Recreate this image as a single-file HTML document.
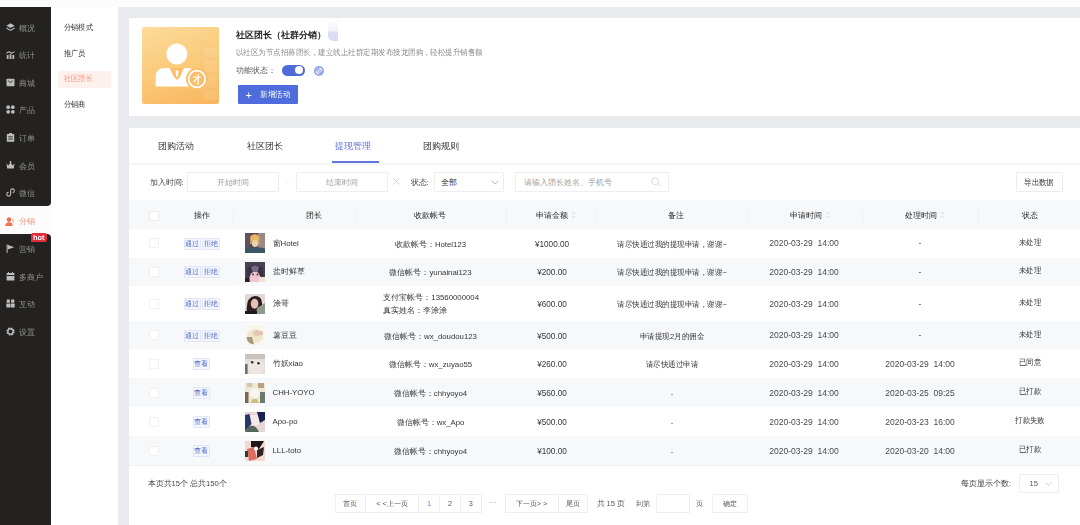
<!DOCTYPE html><html><head><meta charset="utf-8"><style>
*{margin:0;padding:0;box-sizing:border-box}
html,body{width:1080px;height:525px;overflow:hidden;background:#fcfcfc;font-family:"Liberation Sans",sans-serif;color:#555}
.a{position:absolute;white-space:nowrap;line-height:10px}
.side{position:absolute;left:0;width:51px;background:#232221}
.si{position:absolute;left:19px;font-size:7.6px;color:#929292;line-height:10px;white-space:nowrap}
.ic{position:absolute;left:5px;line-height:0}
svg{display:block}
.sm{position:absolute;left:64px;font-size:7.6px;color:#333;line-height:10px;white-space:nowrap;transform:scaleX(0.9);transform-origin:0 0}
.tab{position:absolute;font-size:9.2px;color:#333;line-height:12px;white-space:nowrap}
.inp{position:absolute;border:1px solid #eeeeee;background:#fff;border-radius:1px}
.th{position:absolute;font-size:7.8px;color:#262626;line-height:10px;white-space:nowrap}
.td{position:absolute;font-size:7.8px;color:#363636;line-height:10px;white-space:nowrap}
.ctr{transform:translateX(-50%)}
.sep{position:absolute;width:1px;height:12px;top:209px;background:#eeeff2}
.cb{position:absolute;left:149px;width:10px;height:10px;border:1px solid #f0f0f0;background:#fff;border-radius:1px}
.btn{position:absolute;height:12px;font-size:7px;line-height:10px;color:#4a60c8;border:1px solid #e0e5f7;background:#f5f7fe;text-align:center;border-radius:1px;letter-spacing:-0.2px}
.av{position:absolute;left:245px;width:20px;height:20px;overflow:hidden}
.av svg{filter:blur(0.6px)}
.pg{position:absolute;top:494px;height:18.5px;border:1px solid #efefef;font-size:7.4px;line-height:17px;color:#555;text-align:center;background:#fff}
</style></head><body><div id="wrap" style="position:absolute;left:0;top:0;width:1080px;height:525px;overflow:hidden;filter:blur(0.4px)">
<div style="position:absolute;left:118px;top:7px;width:962px;height:518px;background:#e9eaee"></div>
<div style="position:absolute;left:51px;top:7px;width:67px;height:518px;background:#fff"></div>
<div class="side" style="top:7px;height:199px;border-bottom-right-radius:4px"></div>
<div class="side" style="top:234px;height:291px;border-top-right-radius:4px"></div>
<div style="position:absolute;left:129px;top:18px;width:951px;height:98px;background:#fff"></div>
<div style="position:absolute;left:129px;top:128px;width:951px;height:397px;background:#fff"></div>
<div class="ic" style="top:22.7px;left:5.5px"><svg width="9" height="9" viewBox="0 0 9 9"><path d="M4.5 0.3L8.7 2.7L4.5 5.1L0.3 2.7Z" fill="#bdbdbd"/><path d="M0.6 4.6L4.5 6.8L8.4 4.6L8.8 5.6L4.5 8L0.2 5.6Z" fill="#bdbdbd"/></svg></div>
<div class="si" style="top:23.7px">概况</div>
<div class="ic" style="top:50.3px;left:5.5px"><svg width="9" height="9" viewBox="0 0 9 9"><path d="M0.5 3.5Q2.5 1 4.5 2.5T8.5 1.5" stroke="#bdbdbd" stroke-width="1.1" fill="none"/><rect x="0.8" y="5" width="1.8" height="4" fill="#bdbdbd"/><rect x="3.6" y="4.2" width="1.8" height="4.8" fill="#bdbdbd"/><rect x="6.4" y="5" width="1.8" height="4" fill="#bdbdbd"/></svg></div>
<div class="si" style="top:51.3px">统计</div>
<div class="ic" style="top:77.8px;left:5.5px"><svg width="9" height="9" viewBox="0 0 9 9"><rect x="0.5" y="0.8" width="8" height="7.4" rx="0.6" fill="#bdbdbd"/><path d="M2.2 2.8L4.5 4.6L6.8 2.8" stroke="#232221" stroke-width="0.9" fill="none"/></svg></div>
<div class="si" style="top:78.8px">商城</div>
<div class="ic" style="top:105.39999999999999px;left:5.5px"><svg width="9" height="9" viewBox="0 0 9 9"><circle cx="2.2" cy="2.2" r="1.9" fill="#bdbdbd"/><circle cx="6.8" cy="2.2" r="1.9" fill="#bdbdbd"/><circle cx="2.2" cy="6.8" r="1.9" fill="#bdbdbd"/><circle cx="6.8" cy="6.8" r="1.9" fill="#bdbdbd"/></svg></div>
<div class="si" style="top:106.39999999999999px">产品</div>
<div class="ic" style="top:133.0px;left:5.5px"><svg width="9" height="9" viewBox="0 0 9 9"><rect x="0.8" y="1" width="7.4" height="7.8" rx="0.5" fill="#bdbdbd"/><rect x="3" y="0" width="3" height="2" fill="#bdbdbd"/><rect x="2.3" y="3.4" width="4.4" height="0.9" fill="#232221"/><rect x="2.3" y="5.6" width="4.4" height="0.9" fill="#232221"/></svg></div>
<div class="si" style="top:134.0px">订单</div>
<div class="ic" style="top:160.60000000000002px;left:5.5px"><svg width="9" height="9" viewBox="0 0 9 9"><path d="M0.5 2.5L2.5 4.5L4.5 1L6.5 4.5L8.5 2.5L7.8 7.5H1.2Z" fill="#bdbdbd"/><circle cx="4.5" cy="1" r="0.9" fill="#bdbdbd"/></svg></div>
<div class="si" style="top:161.60000000000002px">会员</div>
<div class="ic" style="top:188.20000000000002px;left:5.5px"><svg width="9" height="9" viewBox="0 0 9 9"><path d="M2.7 4.3A1.9 1.9 0 1 0 4.6 6.2V2.8A1.9 1.9 0 1 1 6.5 4.7" stroke="#bdbdbd" stroke-width="1.1" fill="none"/></svg></div>
<div class="si" style="top:189.20000000000002px">微信</div>
<div class="ic" style="top:216.5px;left:5px"><svg width="9" height="9" viewBox="0 0 9 9"><circle cx="4" cy="2.6" r="2.3" fill="#f0704a"/><path d="M0.3 9Q0.5 5.3 4 5.3Q7.5 5.3 7.7 9Z" fill="#f0704a"/><path d="M7.2 2.5L8.5 1.8V6.5L7.6 6Z" fill="#f6a07f"/></svg></div>
<div class="si" style="top:216.8px;color:#f2907a">分销</div>
<div class="ic" style="top:244.20000000000002px;left:5.5px"><svg width="9" height="9" viewBox="0 0 9 9"><rect x="0.6" y="0.5" width="1" height="8.5" fill="#bdbdbd"/><path d="M1.6 0.8L8.2 3.3L1.6 5.6Z" fill="#bdbdbd"/></svg></div>
<div class="si" style="top:245.20000000000002px">营销</div>
<div class="ic" style="top:271.8px;left:5.5px"><svg width="9" height="9" viewBox="0 0 9 9"><rect x="0.6" y="1" width="7.8" height="7.6" rx="0.5" fill="#bdbdbd"/><rect x="0.6" y="3" width="7.8" height="1" fill="#232221"/><rect x="2" y="0" width="1" height="2" fill="#bdbdbd"/><rect x="6" y="0" width="1" height="2" fill="#bdbdbd"/></svg></div>
<div class="si" style="top:272.8px">多商户</div>
<div class="ic" style="top:299.2px;left:5.5px"><svg width="9" height="9" viewBox="0 0 9 9"><rect x="0.7" y="0.5" width="3.2" height="3.2" rx="0.5" fill="#bdbdbd"/><rect x="5.1" y="0.5" width="3.2" height="3.2" rx="0.5" fill="#bdbdbd"/><rect x="0.3" y="4.6" width="4" height="4" rx="0.5" fill="#bdbdbd"/><rect x="4.7" y="4.6" width="4" height="4" rx="0.5" fill="#bdbdbd"/></svg></div>
<div class="si" style="top:300.2px">互动</div>
<div class="ic" style="top:326.8px;left:5.5px"><svg width="9" height="9" viewBox="0 0 9 9"><circle cx="4.5" cy="4.5" r="3.2" fill="none" stroke="#bdbdbd" stroke-width="1.8" stroke-dasharray="1.6 0.9"/><circle cx="4.5" cy="4.5" r="2.6" fill="none" stroke="#bdbdbd" stroke-width="1.2"/></svg></div>
<div class="si" style="top:327.8px">设置</div>
<div class="a" style="left:31px;top:233px;width:15.5px;height:9px;background:#e22d3b;border-radius:2px 2px 2px 0;color:#fff;font-size:7.5px;font-weight:bold;line-height:9px;text-align:center">hot</div>
<div style="position:absolute;left:58px;top:71px;width:53px;height:17px;background:#fdf1ed;border-radius:2px"></div>
<div class="sm" style="top:22.5px;color:#333">分销模式</div>
<div class="sm" style="top:48.7px;color:#333">推广员</div>
<div class="sm" style="top:74.0px;color:#f39a80">社区团长</div>
<div class="sm" style="top:100.10000000000001px;color:#333">分销商</div>
<div style="position:absolute;left:142px;top:27px;width:77px;height:77px;border-radius:2px;overflow:hidden;background:linear-gradient(160deg,#fcdb9a 0%,#fbca7a 50%,#f9b55c 100%)">
<svg width="77" height="77" viewBox="0 0 77 77" style="position:absolute;left:0;top:0">
<rect x="62" y="21" width="13" height="52" fill="#fff" opacity="0.1"/><rect x="63" y="30" width="10" height="3" fill="#f0a040" opacity="0.12"/><rect x="63" y="45" width="10" height="3" fill="#f0a040" opacity="0.12"/><rect x="63" y="60" width="10" height="3" fill="#f0a040" opacity="0.12"/>
<circle cx="34.8" cy="27" r="10.5" fill="#fff"/>
<path d="M13.7 59.5V50Q13.7 41 23 41H45Q54 41 54 50V59.5Z" fill="#fff"/>
<path d="M27.5 41H42L38 50L35 53L32 50Z" fill="#fbbf6c"/>
<path d="M33.6 43.5H36.4L36 48.5L35 50L34 48.5Z" fill="#fff"/>
<circle cx="54.9" cy="52" r="11" fill="#fbbf6c"/>
<circle cx="54.9" cy="52" r="8.3" fill="none" stroke="#fff" stroke-width="1.7"/>
<path d="M51 50.2H58.8M56.2 47V56Q56.2 57.3 54.8 56.6M55.8 50.8L51.5 55" stroke="#fff" stroke-width="1.3" fill="none" opacity="0.9"/>
</svg></div>
<div class="a" style="left:236px;top:30px;font-size:8.8px;font-weight:bold;color:#222;line-height:11px">社区团长（社群分销）</div>
<div style="position:absolute;left:328px;top:22px;width:10px;height:19px;background:linear-gradient(180deg,#fafafe 0%,#f4f3fd 48%,#dedefa 52%,#dadaf8 100%);border-radius:0 0 0 5px"></div>
<div class="a" style="left:236px;top:48px;font-size:7.6px;color:#8c8c8c;transform:scaleX(0.935);transform-origin:0 0">以社区为节点招募团长，建立线上社群定期发布接龙团购，轻松提升销售额</div>
<div class="a" style="left:236px;top:65.5px;font-size:7.6px;color:#555">功能状态：</div>
<div style="position:absolute;left:282px;top:65px;width:23px;height:10.5px;border-radius:6px;background:#4d6ad8"></div>
<div style="position:absolute;left:294.5px;top:66.2px;width:8.3px;height:8.3px;border-radius:50%;background:#fff"></div>
<div style="position:absolute;left:314px;top:66px;width:10px;height:10px;border-radius:50%;background:#9aa7ec"><svg width="10" height="10" viewBox="0 0 10 10"><path d="M3.2 6.8L6.8 3.2M4.3 3.6L5.2 2.7Q6.2 1.9 7.2 2.8Q8 3.8 7.3 4.8L6.4 5.7M5.7 6.4L4.8 7.3Q3.8 8.1 2.8 7.2Q2 6.2 2.7 5.2L3.6 4.3" stroke="#fff" stroke-width="0.9" fill="none"/></svg></div>
<div style="position:absolute;left:238px;top:85px;width:60px;height:19px;background:#4e6cdb;border-radius:1px"></div>
<div class="a" style="left:245.5px;top:88.5px;font-size:11px;color:#fff;line-height:12px;font-weight:normal">+</div>
<div class="a" style="left:260px;top:89.5px;font-size:7.6px;color:#fff;transform:scaleX(0.94);transform-origin:0 0">新增活动</div>
<div class="tab" style="left:158px;top:140px;color:#333">团购活动</div>
<div class="tab" style="left:247px;top:140px;color:#333">社区团长</div>
<div class="tab" style="left:335px;top:140px;color:#5a6fd9">提现管理</div>
<div class="tab" style="left:423px;top:140px;color:#333">团购规则</div>
<div style="position:absolute;left:129px;top:162.5px;width:951px;height:2px;background:#f4f4f5"></div>
<div style="position:absolute;left:332px;top:161px;width:47px;height:2px;background:#6275dc"></div>
<div class="a" style="left:149.5px;top:178px;font-size:7.6px;color:#444">加入时间:</div>
<div class="inp" style="left:187px;top:172px;width:92px;height:19.5px"></div>
<div class="a ctr" style="left:233px;top:178px;font-size:7.6px;color:#a0a0a0">开始时间</div>
<div class="a" style="left:286.5px;top:177px;font-size:7.4px;color:#ddd">-</div>
<div class="inp" style="left:296px;top:172px;width:92px;height:19.5px"></div>
<div class="a ctr" style="left:342px;top:178px;font-size:7.6px;color:#a0a0a0">结束时间</div>
<svg style="position:absolute;left:393px;top:178px" width="7" height="7" viewBox="0 0 7 7"><path d="M0.5 0.5L6.5 6.5M6.5 0.5L0.5 6.5" stroke="#c4c4c4" stroke-width="0.7"/></svg>
<div class="a" style="left:410.5px;top:178px;font-size:7.6px;color:#444">状态:</div>
<div class="inp" style="left:434px;top:172px;width:70px;height:19.5px"></div>
<div class="a" style="left:440.5px;top:177.8px;font-size:7.6px;color:#333">全部</div>
<svg style="position:absolute;left:491px;top:179.5px" width="8" height="5" viewBox="0 0 8 5"><path d="M0.5 0.8L4 4L7.5 0.8" stroke="#aaa" stroke-width="0.8" fill="none"/></svg>
<div class="inp" style="left:514.5px;top:172px;width:154px;height:19.5px"></div>
<div class="a" style="left:523.5px;top:178px;font-size:7.6px;color:#a0a0a0">请输入团长姓名、手机号</div>
<svg style="position:absolute;left:651px;top:177px" width="10" height="10" viewBox="0 0 10 10"><circle cx="4.3" cy="4.3" r="3.4" stroke="#d4d4d4" stroke-width="0.8" fill="none"/><path d="M6.8 6.8L9.2 9.2" stroke="#d4d4d4" stroke-width="0.8"/></svg>
<div class="inp" style="left:1016px;top:172px;width:47px;height:20px;border-color:#ececec"></div>
<div class="a ctr" style="left:1039px;top:177.5px;font-size:7.6px;color:#333;transform:translateX(-50%) scaleX(0.93)">导出数据</div>
<div style="position:absolute;left:129px;top:200px;width:951px;height:29px;background:#f7f8fa"></div>
<div class="cb" style="top:210.5px;border-color:#ececec"></div>
<div class="th ctr" style="left:201.5px;top:211.4px">操作</div>
<div class="th ctr" style="left:314px;top:211.4px">团长</div>
<div class="th ctr" style="left:430px;top:211.4px">收款帐号</div>
<div class="th ctr" style="left:676px;top:211.4px">备注</div>
<div class="th ctr" style="left:1030px;top:211.4px">状态</div>
<div class="th" style="left:535.5px;top:211.4px">申请金额</div>
<svg style="position:absolute;left:571.0px;top:211px" width="5" height="8" viewBox="0 0 5 8"><path d="M0.8 3L2.5 1.2L4.2 3M0.8 5L2.5 6.8L4.2 5" stroke="#c8c8c8" stroke-width="0.7" fill="none"/></svg>
<div class="th" style="left:789.5px;top:211.4px">申请时间</div>
<svg style="position:absolute;left:825.0px;top:211px" width="5" height="8" viewBox="0 0 5 8"><path d="M0.8 3L2.5 1.2L4.2 3M0.8 5L2.5 6.8L4.2 5" stroke="#c8c8c8" stroke-width="0.7" fill="none"/></svg>
<div class="th" style="left:904.5px;top:211.4px">处理时间</div>
<svg style="position:absolute;left:940.0px;top:211px" width="5" height="8" viewBox="0 0 5 8"><path d="M0.8 3L2.5 1.2L4.2 3M0.8 5L2.5 6.8L4.2 5" stroke="#c8c8c8" stroke-width="0.7" fill="none"/></svg>
<div class="sep" style="left:233px"></div>
<div class="sep" style="left:355px"></div>
<div class="sep" style="left:505.5px"></div>
<div class="sep" style="left:596px"></div>
<div class="sep" style="left:747.5px"></div>
<div class="sep" style="left:862px"></div>
<div class="sep" style="left:978px"></div>
<div class="cb" style="top:238.25px"></div>
<div class="btn" style="left:183.5px;top:237.75px;width:17px">通过</div>
<div class="btn" style="left:202px;top:237.75px;width:17.5px">拒绝</div>
<div class="av" style="top:233.25px"><svg width="20" height="20" viewBox="0 0 20 20"><rect width="20" height="20" fill="#4e4450"/><rect x="13" y="0" width="7" height="16" fill="#9c8884"/><rect x="0" y="0" width="5" height="20" fill="#5e5262"/><path d="M5 3Q10 -1 15 3L15 11L5 11Z" fill="#c89a58"/><ellipse cx="10" cy="5.5" rx="4" ry="3.5" fill="#e6b868"/><ellipse cx="10" cy="10.5" rx="3.2" ry="3.6" fill="#e4cfae"/><path d="M0 20V15.5Q10 12.5 20 15.5V20Z" fill="#3b5664"/></svg></div>
<div class="td" style="left:272.5px;top:238.85px;color:#333">窗Hotel</div>
<div class="td ctr" style="left:430.5px;top:239.75px">收款帐号：Hotel123</div>
<div class="td ctr" style="left:552px;top:239.75px;font-size:8.2px">¥1000.00</div>
<div class="td ctr" style="left:672px;top:239.75px;font-size:8px;transform:translateX(-50%) scaleX(0.94)">请尽快通过我的提现申请，谢谢~</div>
<div class="td ctr" style="left:804px;top:238.45px;font-size:8.5px;color:#4a4a4a">2020-03-29&nbsp;&nbsp;14:00</div>
<div class="td ctr" style="left:920px;top:238.45px;font-size:8.5px;color:#4a4a4a">-</div>
<div class="td ctr" style="left:1030px;top:237.95px;font-size:8px;transform:translateX(-50%) scaleX(0.92)">未处理</div>
<div style="position:absolute;left:129px;top:257.5px;width:951px;height:28.5px;background:#f7f8fa"></div>
<div class="cb" style="top:266.75px"></div>
<div class="btn" style="left:183.5px;top:266.25px;width:17px">通过</div>
<div class="btn" style="left:202px;top:266.25px;width:17.5px">拒绝</div>
<div class="av" style="top:261.75px"><svg width="20" height="20" viewBox="0 0 20 20"><rect width="20" height="20" fill="#484250"/><path d="M2 6Q10 0 18 6L18 20L2 20Z" fill="#3a3242"/><path d="M5 20Q3 11 10 9.5Q16 10 16 20Z" fill="#efc4cf"/><path d="M6 5Q10 2 14 5L12.5 10L7.5 10Z" fill="#7a6a88"/><circle cx="8" cy="12.5" r="1" fill="#4a3848"/><circle cx="12.5" cy="12.5" r="1" fill="#4a3848"/><rect x="14" y="15" width="6" height="5" fill="#f2e2d6"/><rect x="0" y="16" width="4" height="4" fill="#262226"/></svg></div>
<div class="td" style="left:272.5px;top:267.35px;color:#333">盐时鲜草</div>
<div class="td ctr" style="left:430.5px;top:268.25px">微信帐号：yunainai123</div>
<div class="td ctr" style="left:552px;top:268.25px;font-size:8.2px">¥200.00</div>
<div class="td ctr" style="left:672px;top:268.25px;font-size:8px;transform:translateX(-50%) scaleX(0.94)">请尽快通过我的提现申请，谢谢~</div>
<div class="td ctr" style="left:804px;top:266.95px;font-size:8.5px;color:#4a4a4a">2020-03-29&nbsp;&nbsp;14:00</div>
<div class="td ctr" style="left:920px;top:266.95px;font-size:8.5px;color:#4a4a4a">-</div>
<div class="td ctr" style="left:1030px;top:266.45px;font-size:8px;transform:translateX(-50%) scaleX(0.92)">未处理</div>
<div class="cb" style="top:298.5px"></div>
<div class="btn" style="left:183.5px;top:298.0px;width:17px">通过</div>
<div class="btn" style="left:202px;top:298.0px;width:17.5px">拒绝</div>
<div class="av" style="top:293.5px"><svg width="20" height="20" viewBox="0 0 20 20"><rect width="20" height="20" fill="#e2d8d8"/><path d="M2 20Q0 3 10 2Q18 2 17 12L14 20Z" fill="#2e1e20"/><ellipse cx="9.6" cy="9.8" rx="3.8" ry="5" fill="#e6c2b4"/><path d="M12 14L20 9V20H11Z" fill="#8c9c8a"/><rect x="0" y="17" width="12" height="3" fill="#1a1a1a"/></svg></div>
<div class="td" style="left:272.5px;top:299.1px;color:#333">涂哥</div>
<div class="td" style="left:383.3px;top:292.9px">支付宝帐号：13560000004</div>
<div class="td" style="left:383.3px;top:306.4px">真实姓名：李涂涂</div>
<div class="td ctr" style="left:552px;top:300.0px;font-size:8.2px">¥600.00</div>
<div class="td ctr" style="left:672px;top:300.0px;font-size:8px;transform:translateX(-50%) scaleX(0.94)">请尽快通过我的提现申请，谢谢~</div>
<div class="td ctr" style="left:804px;top:298.7px;font-size:8.5px;color:#4a4a4a">2020-03-29&nbsp;&nbsp;14:00</div>
<div class="td ctr" style="left:920px;top:298.7px;font-size:8.5px;color:#4a4a4a">-</div>
<div class="td ctr" style="left:1030px;top:298.2px;font-size:8px;transform:translateX(-50%) scaleX(0.92)">未处理</div>
<div style="position:absolute;left:129px;top:321px;width:951px;height:28px;background:#f7f8fa"></div>
<div class="cb" style="top:330.0px"></div>
<div class="btn" style="left:183.5px;top:329.5px;width:17px">通过</div>
<div class="btn" style="left:202px;top:329.5px;width:17.5px">拒绝</div>
<div class="av" style="top:325.0px"><svg width="20" height="20" viewBox="0 0 20 20"><rect width="20" height="20" fill="#faf6ee"/><ellipse cx="10" cy="11" rx="8" ry="7" fill="#f0e6cc"/><path d="M1.5 12Q2 19 9 19.5L7 12Z" fill="#a8967c"/><ellipse cx="12" cy="8" rx="4" ry="3" fill="#dccbb0"/><circle cx="16" cy="8" r="2.2" fill="#e6c0bc"/></svg></div>
<div class="td" style="left:272.5px;top:330.6px;color:#333">薯豆豆</div>
<div class="td ctr" style="left:430.5px;top:331.5px">微信帐号：wx_doudou123</div>
<div class="td ctr" style="left:552px;top:331.5px;font-size:8.2px">¥500.00</div>
<div class="td ctr" style="left:672px;top:331.5px;font-size:8px;transform:translateX(-50%) scaleX(0.94)">申请提现2月的佣金</div>
<div class="td ctr" style="left:804px;top:330.2px;font-size:8.5px;color:#4a4a4a">2020-03-29&nbsp;&nbsp;14:00</div>
<div class="td ctr" style="left:920px;top:330.2px;font-size:8.5px;color:#4a4a4a">-</div>
<div class="td ctr" style="left:1030px;top:329.7px;font-size:8px;transform:translateX(-50%) scaleX(0.92)">未处理</div>
<div class="cb" style="top:358.5px"></div>
<div class="btn" style="left:192.5px;top:358.0px;width:17px">查看</div>
<div class="av" style="top:353.5px"><svg width="20" height="20" viewBox="0 0 20 20"><rect width="20" height="20" fill="#e4dedb"/><rect x="0" y="0" width="20" height="5" fill="#cbc2ba"/><rect x="0" y="10" width="2.6" height="10" fill="#6e6e6e"/><ellipse cx="11" cy="13" rx="8" ry="7.5" fill="#efe6e4"/><circle cx="7.2" cy="8.2" r="1.3" fill="#3a2a28"/><circle cx="13.5" cy="9.3" r="1.3" fill="#3a2a28"/></svg></div>
<div class="td" style="left:272.5px;top:359.1px;color:#333">竹妖xiao</div>
<div class="td ctr" style="left:430.5px;top:360.0px">微信帐号：wx_zuyao55</div>
<div class="td ctr" style="left:552px;top:360.0px;font-size:8.2px">¥260.00</div>
<div class="td ctr" style="left:672px;top:360.0px;font-size:8px;transform:translateX(-50%) scaleX(0.94)">请尽快通过申请</div>
<div class="td ctr" style="left:804px;top:358.7px;font-size:8.5px;color:#4a4a4a">2020-03-29&nbsp;&nbsp;14:00</div>
<div class="td ctr" style="left:920px;top:358.7px;font-size:8.5px;color:#4a4a4a">2020-03-29&nbsp;&nbsp;14:00</div>
<div class="td ctr" style="left:1030px;top:358.2px;font-size:8px;transform:translateX(-50%) scaleX(0.92)">已同意</div>
<div style="position:absolute;left:129px;top:378px;width:951px;height:29px;background:#f7f8fa"></div>
<div class="cb" style="top:387.5px"></div>
<div class="btn" style="left:192.5px;top:387.0px;width:17px">查看</div>
<div class="av" style="top:382.5px"><svg width="20" height="20" viewBox="0 0 20 20"><rect width="20" height="20" fill="#eee8d8"/><rect x="0" y="9" width="3.5" height="11" fill="#786858"/><rect x="15" y="9" width="5" height="11" fill="#6a7a6c"/><circle cx="10" cy="10" r="5" fill="#f6f6f0"/><rect x="2" y="0" width="5" height="4" fill="#d4c4a8"/><rect x="13" y="0" width="6" height="5" fill="#b8a080"/><path d="M5 20L8 16L12 16L14 20Z" fill="#cdbd80"/></svg></div>
<div class="td" style="left:272.5px;top:388.1px;color:#333">CHH-YOYO</div>
<div class="td ctr" style="left:430.5px;top:389.0px">微信帐号：chhyoyo4</div>
<div class="td ctr" style="left:552px;top:389.0px;font-size:8.2px">¥560.00</div>
<div class="td ctr" style="left:672px;top:389.0px;font-size:8px;transform:translateX(-50%) scaleX(0.94)">-</div>
<div class="td ctr" style="left:804px;top:387.7px;font-size:8.5px;color:#4a4a4a">2020-03-29&nbsp;&nbsp;14:00</div>
<div class="td ctr" style="left:920px;top:387.7px;font-size:8.5px;color:#4a4a4a">2020-03-25&nbsp;&nbsp;09:25</div>
<div class="td ctr" style="left:1030px;top:387.2px;font-size:8px;transform:translateX(-50%) scaleX(0.92)">已打款</div>
<div class="cb" style="top:416.5px"></div>
<div class="btn" style="left:192.5px;top:416.0px;width:17px">查看</div>
<div class="av" style="top:411.5px"><svg width="20" height="20" viewBox="0 0 20 20"><rect width="20" height="20" fill="#e8d6d6"/><rect x="5" y="3" width="9" height="10" fill="#f4eaea"/><path d="M0 3L4.5 2L6.5 12L0 19Z" fill="#2c3668"/><path d="M12 0H20V8L15 11Z" fill="#1c2250"/><path d="M0 20L3 15Q10 11 14 20Z" fill="#56665a"/></svg></div>
<div class="td" style="left:272.5px;top:417.1px;color:#333">Apo-po</div>
<div class="td ctr" style="left:430.5px;top:418.0px">微信帐号：wx_Apo</div>
<div class="td ctr" style="left:552px;top:418.0px;font-size:8.2px">¥500.00</div>
<div class="td ctr" style="left:672px;top:418.0px;font-size:8px;transform:translateX(-50%) scaleX(0.94)">-</div>
<div class="td ctr" style="left:804px;top:416.7px;font-size:8.5px;color:#4a4a4a">2020-03-29&nbsp;&nbsp;14:00</div>
<div class="td ctr" style="left:920px;top:416.7px;font-size:8.5px;color:#4a4a4a">2020-03-23&nbsp;&nbsp;16:00</div>
<div class="td ctr" style="left:1030px;top:416.2px;font-size:8px;transform:translateX(-50%) scaleX(0.92)">打款失败</div>
<div style="position:absolute;left:129px;top:436px;width:951px;height:29px;background:#f7f8fa"></div>
<div class="cb" style="top:445.5px"></div>
<div class="btn" style="left:192.5px;top:445.0px;width:17px">查看</div>
<div class="av" style="top:440.5px"><svg width="20" height="20" viewBox="0 0 20 20"><rect width="20" height="20" fill="#f0dad2"/><path d="M6 0H19L14 8L6 6Z" fill="#1e1616"/><path d="M2 8L9 6L12 18L4 20Z" fill="#dc6e60"/><path d="M12 9L19 6L18 14L12 17Z" fill="#30242a"/><circle cx="11" cy="7.5" r="2" fill="#fff"/><rect x="0" y="10" width="3" height="6" fill="#304030"/></svg></div>
<div class="td" style="left:272.5px;top:446.1px;color:#333">LLL-toto</div>
<div class="td ctr" style="left:430.5px;top:447.0px">微信帐号：chhyoyo4</div>
<div class="td ctr" style="left:552px;top:447.0px;font-size:8.2px">¥100.00</div>
<div class="td ctr" style="left:672px;top:447.0px;font-size:8px;transform:translateX(-50%) scaleX(0.94)">-</div>
<div class="td ctr" style="left:804px;top:445.7px;font-size:8.5px;color:#4a4a4a">2020-03-29&nbsp;&nbsp;14:00</div>
<div class="td ctr" style="left:920px;top:445.7px;font-size:8.5px;color:#4a4a4a">2020-03-20&nbsp;&nbsp;14:00</div>
<div class="td ctr" style="left:1030px;top:445.2px;font-size:8px;transform:translateX(-50%) scaleX(0.92)">已打款</div>
<div style="position:absolute;left:129px;top:465px;width:951px;height:1px;background:#f2f2f2"></div>
<div class="a" style="left:147.5px;top:478.5px;font-size:7.6px;color:#444">本页共15个&nbsp;总共150个</div>
<div class="a" style="left:961px;top:479px;font-size:7.6px;color:#444">每页显示个数:</div>
<div class="inp" style="left:1018.5px;top:474px;width:40px;height:18.5px"></div>
<div class="a" style="left:1029.5px;top:479px;font-size:7.6px;color:#555">15</div>
<svg style="position:absolute;left:1045px;top:481.5px" width="7" height="4" viewBox="0 0 7 4"><path d="M0.5 0.5L3.5 3.3L6.5 0.5" stroke="#bbb" stroke-width="0.7" fill="none"/></svg>
<div class="pg" style="left:334.5px;width:31.5px;color:#555">首页</div>
<div class="pg" style="left:365px;width:54px;color:#555">&lt; &lt;上一页</div>
<div class="pg" style="left:418px;width:22px;color:#6b7cdc">1</div>
<div class="pg" style="left:439px;width:22px;color:#555">2</div>
<div class="pg" style="left:460px;width:21.5px;color:#555">3</div>
<div class="pg" style="left:504.5px;width:54.0px;color:#555">下一页&gt; &gt;</div>
<div class="pg" style="left:557.5px;width:30.0px;color:#555">尾页</div>
<div class="pg" style="left:712px;width:36px;color:#555">确定</div>
<div class="a" style="left:489px;top:498px;font-size:7.4px;color:#999">···</div>
<div class="a" style="left:596.5px;top:498.8px;font-size:7.6px;color:#555">共&nbsp;15&nbsp;页</div>
<div class="a" style="left:636px;top:499px;font-size:7.4px;color:#555">到第</div>
<div class="pg" style="left:656px;width:33.5px"></div>
<div class="a" style="left:696px;top:499px;font-size:7.4px;color:#555">页</div>
</div></body></html>
